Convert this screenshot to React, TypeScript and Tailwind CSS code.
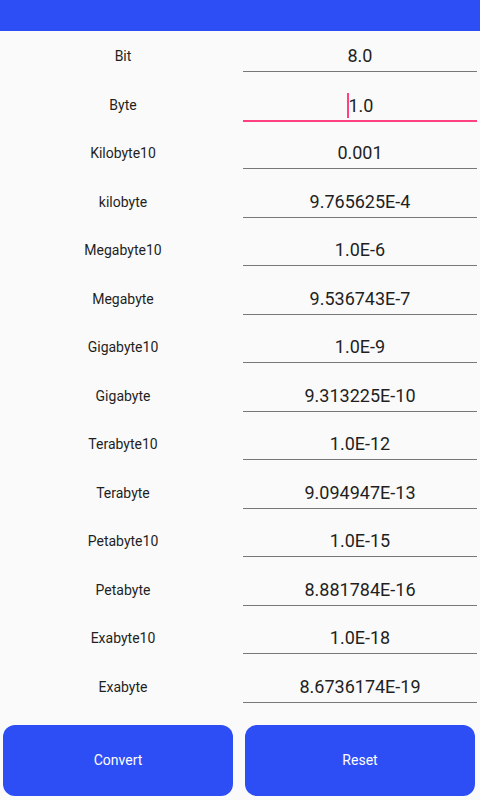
const units: [string, string][] = [
  ["Bit", "8.0"],
  ["Byte", "1.0"],
  ["Kilobyte10", "0.001"],
  ["kilobyte", "9.765625E-4"],
  ["Megabyte10", "1.0E-6"],
  ["Megabyte", "9.536743E-7"],
  ["Gigabyte10", "1.0E-9"],
  ["Gigabyte", "9.313225E-10"],
  ["Terabyte10", "1.0E-12"],
  ["Terabyte", "9.094947E-13"],
  ["Petabyte10", "1.0E-15"],
  ["Petabyte", "8.881784E-16"],
  ["Exabyte10", "1.0E-18"],
  ["Exabyte", "8.6736174E-19"],
]

export default function App() {
  return (
    <div className="w-[480px] h-[800px] bg-[#fafafa] font-['Roboto',sans-serif] text-[#1f1f1f] overflow-hidden">
      <div className="h-[31px] bg-[#2d4ef5]" />
      <div className="pt-[1px]">
        {units.map(([name, value], i) => {
          const focused = i === 1
          return (
            <div key={name} className="flex h-[48.5px]">
              <div className="w-[246px] h-[48px] flex items-center justify-center text-[14px] pt-[1px]">{name}</div>
              <div
                className={
                  "w-[234px] ml-[-3px] pt-[12px] leading-[24px] text-center text-[18px] " +
                  (focused ? "h-[41px] border-b-2 border-[#ff4081]" : "h-[40px] border-b border-[#777777]")
                }
              >
                {focused && <span className="inline-block w-[2px] h-[25px] bg-[#ff4081] align-[-6px]" />}
                {value}
              </div>
            </div>
          )
        })}
      </div>
      <div className="flex gap-[12px] pl-[3px] mt-[14px]">
        <button className="w-[230px] h-[71px] rounded-[12px] bg-[#2d4ef5] text-white text-[14px]">Convert</button>
        <button className="w-[230px] h-[71px] rounded-[12px] bg-[#2d4ef5] text-white text-[14px]">Reset</button>
      </div>
    </div>
  )
}
